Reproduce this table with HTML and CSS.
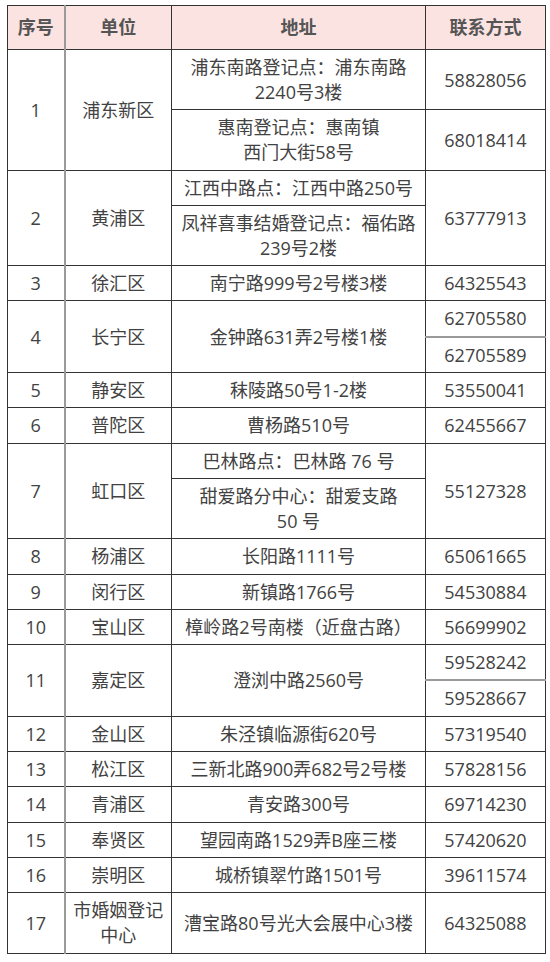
FILE: index.html
```html
<!DOCTYPE html>
<html lang="zh-CN">
<head>
<meta charset="utf-8">
<title>婚姻登记处联系方式</title>
<link rel="stylesheet" href="styles.css">
</head>
<body>
<table class="tbl">
  <colgroup>
    <col class="c-no">
    <col class="c-unit">
    <col class="c-addr">
    <col class="c-tel">
  </colgroup>
  <thead>
    <tr class="head">
      <th class="first-col">序号</th>
      <th>单位</th>
      <th>地址</th>
      <th>联系方式</th>
    </tr>
  </thead>
  <tbody>
    <tr class="r2">
      <td class="first-col" rowspan="2">1</td>
      <td rowspan="2">浦东新区</td>
      <td>浦东南路登记点：浦东南路<br>2240号3楼</td>
      <td>58828056</td>
    </tr>
    <tr class="r2">
      <td>惠南登记点：惠南镇<br>西门大街58号</td>
      <td>68018414</td>
    </tr>
    <tr>
      <td class="first-col" rowspan="2">2</td>
      <td rowspan="2">黄浦区</td>
      <td>江西中路点：江西中路250号</td>
      <td rowspan="2">63777913</td>
    </tr>
    <tr class="r2">
      <td>凤祥喜事结婚登记点：福佑路<br>239号2楼</td>
    </tr>
    <tr>
      <td class="first-col">3</td>
      <td>徐汇区</td>
      <td>南宁路999号2号楼3楼</td>
      <td>64325543</td>
    </tr>
    <tr>
      <td class="first-col" rowspan="2">4</td>
      <td rowspan="2">长宁区</td>
      <td rowspan="2">金钟路631弄2号楼1楼</td>
      <td class="split-top">62705580</td>
    </tr>
    <tr>
      <td class="split-bottom">62705589</td>
    </tr>
    <tr>
      <td class="first-col">5</td>
      <td>静安区</td>
      <td>秣陵路50号1-2楼</td>
      <td>53550041</td>
    </tr>
    <tr>
      <td class="first-col">6</td>
      <td>普陀区</td>
      <td>曹杨路510号</td>
      <td>62455667</td>
    </tr>
    <tr>
      <td class="first-col" rowspan="2">7</td>
      <td rowspan="2">虹口区</td>
      <td>巴林路点：巴林路 76 号</td>
      <td rowspan="2">55127328</td>
    </tr>
    <tr class="r2">
      <td>甜爱路分中心：甜爱支路<br>50 号</td>
    </tr>
    <tr>
      <td class="first-col">8</td>
      <td>杨浦区</td>
      <td>长阳路1111号</td>
      <td>65061665</td>
    </tr>
    <tr>
      <td class="first-col">9</td>
      <td>闵行区</td>
      <td>新镇路1766号</td>
      <td>54530884</td>
    </tr>
    <tr>
      <td class="first-col">10</td>
      <td>宝山区</td>
      <td>樟岭路2号南楼（近盘古路）</td>
      <td>56699902</td>
    </tr>
    <tr>
      <td class="first-col" rowspan="2">11</td>
      <td rowspan="2">嘉定区</td>
      <td rowspan="2">澄浏中路2560号</td>
      <td class="split-top">59528242</td>
    </tr>
    <tr>
      <td class="split-bottom">59528667</td>
    </tr>
    <tr>
      <td class="first-col">12</td>
      <td>金山区</td>
      <td>朱泾镇临源街620号</td>
      <td>57319540</td>
    </tr>
    <tr>
      <td class="first-col">13</td>
      <td>松江区</td>
      <td>三新北路900弄682号2号楼</td>
      <td>57828156</td>
    </tr>
    <tr>
      <td class="first-col">14</td>
      <td>青浦区</td>
      <td>青安路300号</td>
      <td>69714230</td>
    </tr>
    <tr>
      <td class="first-col">15</td>
      <td>奉贤区</td>
      <td>望园南路1529弄B座三楼</td>
      <td>57420620</td>
    </tr>
    <tr>
      <td class="first-col">16</td>
      <td>崇明区</td>
      <td>城桥镇翠竹路1501号</td>
      <td>39611574</td>
    </tr>
    <tr class="r2">
      <td class="first-col">17</td>
      <td>市婚姻登记<br>中心</td>
      <td>漕宝路80号光大会展中心3楼</td>
      <td>64325088</td>
    </tr>
  </tbody>
</table>
</body>
</html>
```

FILE: styles.css
```css
html, body {
  margin: 0;
  padding: 0;
  background: #ffffff;
}

body {
  padding: 5px 0 0 7px;
  font-family: "Open Sans", "Noto Sans CJK SC", sans-serif;
  color: #424242;
}

.tbl {
  border-collapse: collapse;
  table-layout: fixed;
  width: 538px;
  font-size: 18px;
  line-height: 25px;
}

.c-no { width: 57px; }
.c-unit { width: 107px; }
.c-addr { width: 254px; }
.c-tel { width: 120px; }

.tbl th,
.tbl td {
  border: 1px solid #333333;
  text-align: center;
  vertical-align: middle;
  white-space: nowrap;
  padding: 5px 0 4.3px;
  overflow: hidden;
}

.tbl th {
  background: #fbe3e2;
  font-weight: 700;
  color: #555555;
  height: 43px;
  padding: 0;
}

.tbl td.first-col,
.tbl th.first-col {
  border-right: 2px solid #9a9a9a;
}

.tbl td.split-top {
  border-bottom: 2px solid #9a9a9a;
}

.tbl td.split-bottom {
  border-top: 2px solid #9a9a9a;
}
```
